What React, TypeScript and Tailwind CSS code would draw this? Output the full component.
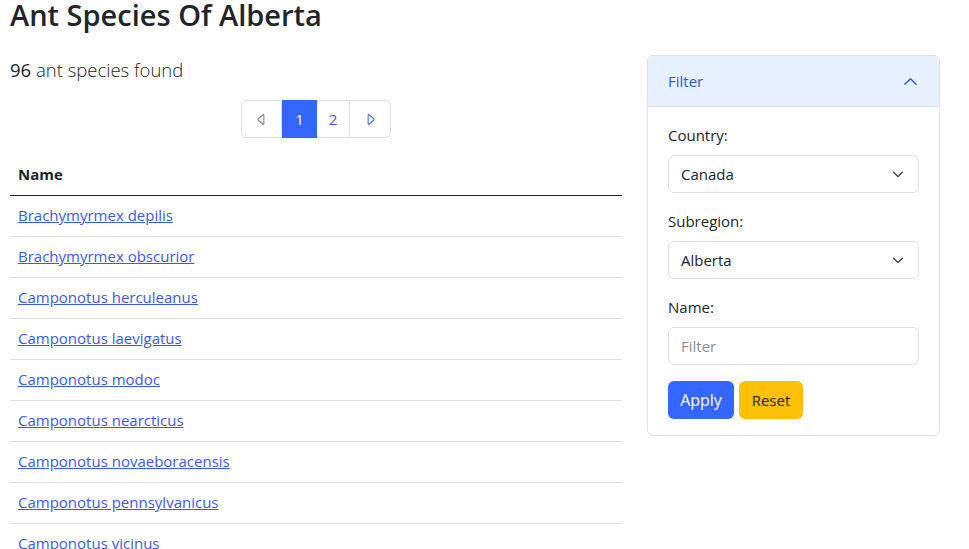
const species = [
  'Brachymyrmex depilis',
  'Brachymyrmex obscurior',
  'Camponotus herculeanus',
  'Camponotus laevigatus',
  'Camponotus modoc',
  'Camponotus nearcticus',
  'Camponotus novaeboracensis',
  'Camponotus pennsylvanicus',
  'Camponotus vicinus',
  'Dolichoderus plagiatus',
  'Dolichoderus taschenbergi',
];

function Chevron({ up, className }: { up?: boolean; className?: string }) {
  return (
    <svg viewBox="0 0 16 16" className={className} fill="none" stroke="currentColor" strokeWidth="1.5" strokeLinecap="round" strokeLinejoin="round">
      {up ? <path d="M2 11l6-6 6 6" /> : <path d="M3 6l5 5 5-5" />}
    </svg>
  );
}

function Caret({ dir, className }: { dir: 'left' | 'right'; className?: string }) {
  return (
    <svg viewBox="0 0 16 16" className={className} fill="currentColor">
      {dir === 'left' ? (
        <path d="M10 12.796V3.204L4.519 8 10 12.796zm-.659.753-5.48-4.796a1 1 0 0 1 0-1.506l5.48-4.796A1 1 0 0 1 11 3.204v9.592a1 1 0 0 1-1.659.753z" />
      ) : (
        <path d="M6 12.796V3.204L11.481 8 6 12.796zm.659.753 5.48-4.796a1 1 0 0 0 0-1.506L6.66 2.451C6.011 1.885 5 2.345 5 3.204v9.592a1 1 0 0 0 1.659.753z" />
      )}
    </svg>
  );
}

function Pagination() {
  return (
    <div className="flex justify-center">
      <div className="flex h-[38px] text-[15px]">
        <div className="flex w-[41px] items-center justify-center rounded-l-md border border-[#dee2e6] text-[#6c757d]">
          <Caret dir="left" className="h-[15px] w-[15px]" />
        </div>
        <div className="flex w-[35px] items-center justify-center border border-[#3366ff] bg-[#3366ff] text-white">1</div>
        <div className="flex w-[33px] items-center justify-center border border-l-0 border-[#dee2e6] text-[#3d5be0]">2</div>
        <div className="flex w-[41px] items-center justify-center rounded-r-md border border-l-0 border-[#dee2e6] text-[#3d5be0]">
          <Caret dir="right" className="h-[15px] w-[15px]" />
        </div>
      </div>
    </div>
  );
}

function SelectBox({ value }: { value: string }) {
  return (
    <div className="flex h-[38px] items-center justify-between rounded-md border border-[#dee2e6] pl-3 pr-[13px] text-[#212529]">
      <span>{value}</span>
      <Chevron className="h-[14px] w-[14px] text-[#343a40]" />
    </div>
  );
}

function FilterCard() {
  return (
    <div className="w-[293px] rounded-md border border-[#dee2e6]">
      <div className="flex h-[51px] items-center justify-between rounded-t-md border-b border-[#dee2e6] bg-[#e7f1ff] pl-5 pr-5 text-[#2f5bd6]">
        <span>Filter</span>
        <Chevron up className="h-[15px] w-[17px]" />
      </div>
      <div className="px-5 pb-4 pt-[16px] leading-6 text-[#212529]">
        <div className="mb-2">Country:</div>
        <SelectBox value="Canada" />
        <div className="mb-2 mt-[16px]">Subregion:</div>
        <SelectBox value="Alberta" />
        <div className="mb-2 mt-[16px]">Name:</div>
        <div className="flex h-[38px] items-center rounded-md border border-[#dee2e6] px-3 text-[#8a9097]">Filter</div>
        <div className="mt-4 flex gap-[5px]">
          <button className="h-[38px] w-[66px] rounded-md bg-[#3366ff] text-[16px] text-white">Apply</button>
          <button className="h-[38px] w-[64px] rounded-md bg-[#ffc107] text-[#212529]">Reset</button>
        </div>
      </div>
    </div>
  );
}

export default function App() {
  return (
    <div className="min-h-screen bg-white px-[10px] text-[15px] text-[#212529]" style={{ fontFamily: '"Segoe UI", "Open Sans", "Noto Sans", sans-serif' }}>
      <h1 className="mb-[25px] text-[29px] font-semibold leading-[30px]">Ant Species Of Alberta</h1>
      <div className="flex gap-[25px]">
        <div className="w-[612px]">
          <p className="text-[18.5px] font-light leading-[30px] text-[#212529]">
            <span className="font-normal">96</span> ant species found
          </p>
          <div className="mt-[15px]">
            <Pagination />
          </div>
          <table className="mt-[16px] w-full border-collapse">
            <thead>
              <tr className="border-b-[1.5px] border-[#212529]">
                <th className="h-[41px] px-2 text-left font-bold">Name</th>
              </tr>
            </thead>
            <tbody>
              {species.map((s) => (
                <tr key={s} className="border-b border-[#dee2e6]">
                  <td className="h-[41px] px-2">
                    <a href="#" className="text-[#3d5be0] underline">{s}</a>
                  </td>
                </tr>
              ))}
            </tbody>
          </table>
        </div>
        <div>
          <FilterCard />
        </div>
      </div>
    </div>
  );
}
